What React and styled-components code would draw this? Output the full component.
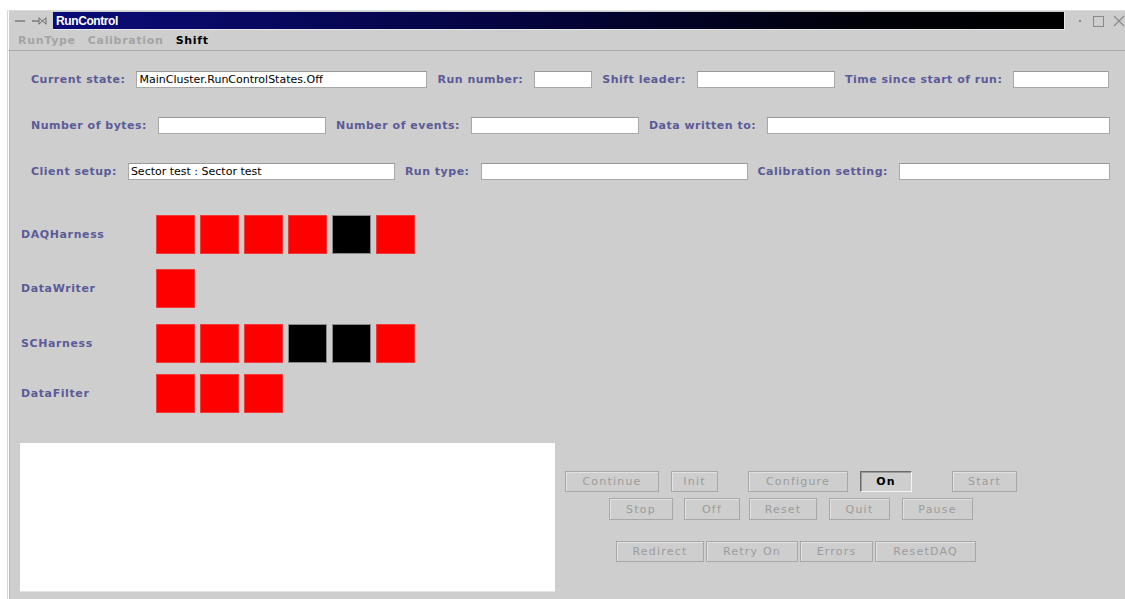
import styled, { createGlobalStyle } from "styled-components";

const GlobalStyle = createGlobalStyle`
  html, body {
    margin: 0;
    padding: 0;
    background: #ffffff;
    overflow: hidden;
  }
  body {
    font-family: "DejaVu Sans", "Liberation Sans", sans-serif;
  }
`;

const Frame = styled.div`
  margin: 10px 0 0 7px;
  height: 589px;
  border-top: 1px solid #dcdcdc;
  border-left: 1px solid #d6d6d6;
  background: #cecece;
  display: flex;
  flex-direction: column;
`;

const TitleBar = styled.div`
  height: 20px;
  display: flex;
  align-items: center;
  padding-left: 5px;
  border-left: 1px solid #ffffff;
`;

const WinIcons = styled.div`
  width: 34px;
  height: 12px;
  display: flex;
  align-items: center;
`;

const TitleBlock = styled.div`
  flex: 1;
  height: 17px;
  margin-left: 5px;
  margin-right: 8px;
  background: linear-gradient(to right, #0b0b7a 0%, #040440 45%, #000008 80%, #000 100%);
  border-right: 1px solid #e8e8e8;
  border-bottom: 1px solid #e8e8e8;
  display: flex;
  align-items: center;
  padding-left: 3px;
  color: #ffffff;
  font-family: "Liberation Sans", Arial, sans-serif;
  font-weight: bold;
  font-size: 12px;
  letter-spacing: -0.4px;
`;

const RightIcons = styled.div`
  width: 52px;
  height: 12px;
  display: flex;
  align-items: center;
`;

const MenuBar = styled.div`
  height: 19px;
  display: flex;
  align-items: center;
  gap: 12px;
  padding-left: 9px;
  border-left: 1px solid #ffffff;
  border-bottom: 1px solid #a9a9a9;
`;

const MenuItem = styled.span`
  font-size: 11px;
  font-weight: bold;
  letter-spacing: 0.7px;
  color: ${(p) => (p.active ? "#000000" : "#a4a4a4")};
`;

const Content = styled.div`
  flex: 1;
  border-left: 1px solid #ffffff;
  box-shadow: inset 1px 0 0 #bdbdbd;
  padding: 20px 0 0 1px;
  display: flex;
  flex-direction: column;
`;

const Fields = styled.div`
  display: flex;
  flex-direction: column;
  gap: 29px;
  padding-left: 21px;
`;

const FieldRow = styled.div`
  display: flex;
  align-items: center;
  height: 17px;
`;

const Label = styled.span`
  font-size: 11px;
  font-weight: bold;
  letter-spacing: 0.5px;
  color: #5b5b97;
  white-space: nowrap;
  margin-right: 11px;
`;

const TextField = styled.div`
  box-sizing: border-box;
  width: ${(p) => p.w}px;
  height: 17px;
  margin-right: 10px;
  background: #ffffff;
  border: 1px solid #a8a8a8;
  border-top-color: #999999;
  font-size: 11px;
  color: #000000;
  line-height: 15px;
  padding-left: 2px;
  white-space: nowrap;
  overflow: hidden;
`;

const Status = styled.div`
  margin-top: 35px;
  padding-left: 11px;
  display: flex;
  flex-direction: column;
`;

const StatusRow = styled.div`
  display: flex;
  align-items: center;
  height: 39px;
  margin-top: ${(p) => p.top || 0}px;
`;

const StatusName = styled.span`
  width: 135px;
  font-size: 11px;
  font-weight: bold;
  letter-spacing: 0.6px;
  color: #5b5b97;
`;

const Cells = styled.div`
  display: flex;
  gap: 5px;
`;

const Cell = styled.div`
  box-sizing: border-box;
  width: 39px;
  height: 39px;
  background: ${(p) => (p.on ? "#000000" : "#ff0000")};
  border: 1px solid ${(p) => (p.on ? "#8a8a8a" : "#f23a3a")};
`;

const Bottom = styled.div`
  display: flex;
  margin-top: 30px;
  padding-left: 10px;
`;

const LogArea = styled.div`
  width: 535px;
  height: 148px;
  background: #ffffff;
  border-bottom: 1px solid #e4e4e4;
`;

const Controls = styled.div`
  padding-top: 28px;
  display: flex;
  flex-direction: column;
`;

const ButtonRow = styled.div`
  display: flex;
  padding-left: ${(p) => p.indent}px;
  margin-top: ${(p) => p.top || 0}px;
`;

const Button = styled.div`
  box-sizing: border-box;
  width: ${(p) => p.w}px;
  height: ${(p) => p.h || 21}px;
  margin-left: ${(p) => p.ml || 0}px;
  display: flex;
  align-items: center;
  justify-content: center;
  font-size: 11px;
  letter-spacing: 1.2px;
  color: #9c9c9c;
  border: 1px solid #a8a8a8;
  box-shadow: inset 1px 1px 0 #e2e2e2;
  ${(p) =>
    p.focus &&
    `
    color: #000000;
    font-weight: bold;
    border-color: #6a6a6a #f4f4f4 #f4f4f4 #6a6a6a;
    box-shadow: inset 1px 1px 0 #9a9a9a;
  `}
`;

const states = [
  { name: "DAQHarness", cells: [0, 0, 0, 0, 1, 0], top: 0 },
  { name: "DataWriter", cells: [0], top: 15 },
  { name: "SCHarness", cells: [0, 0, 0, 1, 1, 0], top: 16 },
  { name: "DataFilter", cells: [0, 0, 0], top: 11 },
];

const LeftWinIcons = () => (
  <WinIcons>
    <svg width="34" height="12" viewBox="0 0 34 12">
      <line x1="1" y1="6" x2="11" y2="6" stroke="#6e6e6e" strokeWidth="1.3" />
      <line x1="18" y1="6" x2="25" y2="6" stroke="#6e6e6e" strokeWidth="1.3" />
      <path d="M25 2.5 L25 9.5 M25 3 L32 9 M25 9 L32 3 M32 2.5 L32 9.5" stroke="#6e6e6e" strokeWidth="1" fill="none" />
    </svg>
  </WinIcons>
);

const RightWinIcons = () => (
  <RightIcons>
    <svg width="52" height="12" viewBox="0 0 52 12">
      <rect x="6" y="5" width="2" height="2" fill="#8a8a8a" />
      <rect x="20.5" y="1.5" width="10" height="10" stroke="#8a8a8a" fill="none" />
      <path d="M41 1 L51 11 M51 1 L41 11" stroke="#8a8a8a" strokeWidth="1.2" />
    </svg>
  </RightIcons>
);

export default function App() {
  return (
    <>
      <GlobalStyle />
      <Frame>
        <TitleBar>
          <LeftWinIcons />
          <TitleBlock>RunControl</TitleBlock>
          <RightWinIcons />
        </TitleBar>
        <MenuBar>
          <MenuItem>RunType</MenuItem>
          <MenuItem>Calibration</MenuItem>
          <MenuItem active>Shift</MenuItem>
        </MenuBar>
        <Content>
          <Fields>
            <FieldRow>
              <Label>Current state:</Label>
              <TextField w={291}>MainCluster.RunControlStates.Off</TextField>
              <Label>Run number:</Label>
              <TextField w={58} />
              <Label>Shift leader:</Label>
              <TextField w={138} />
              <Label>Time since start of run:</Label>
              <TextField w={96} />
            </FieldRow>
            <FieldRow>
              <Label>Number of bytes:</Label>
              <TextField w={168} />
              <Label>Number of events:</Label>
              <TextField w={168} />
              <Label>Data written to:</Label>
              <TextField w={343} />
            </FieldRow>
            <FieldRow>
              <Label>Client setup:</Label>
              <TextField w={267}>Sector test : Sector test</TextField>
              <Label>Run type:</Label>
              <TextField w={267} />
              <Label>Calibration setting:</Label>
              <TextField w={211} />
            </FieldRow>
          </Fields>

          <Status>
            {states.map((s) => (
              <StatusRow key={s.name} top={s.top}>
                <StatusName>{s.name}</StatusName>
                <Cells>
                  {s.cells.map((c, i) => (
                    <Cell key={i} on={c ? 1 : 0} />
                  ))}
                </Cells>
              </StatusRow>
            ))}
          </Status>

          <Bottom>
            <LogArea />
            <Controls>
              <ButtonRow indent={10}>
                <Button w={94}>Continue</Button>
                <Button w={47} ml={12}>Init</Button>
                <Button w={100} ml={30}>Configure</Button>
                <Button w={52} ml={12} focus>On</Button>
                <Button w={65} ml={40}>Start</Button>
              </ButtonRow>
              <ButtonRow indent={54} top={6}>
                <Button w={64} h={22}>Stop</Button>
                <Button w={56} h={22} ml={11}>Off</Button>
                <Button w={68} h={22} ml={9}>Reset</Button>
                <Button w={61} h={22} ml={12}>Quit</Button>
                <Button w={71} h={22} ml={12}>Pause</Button>
              </ButtonRow>
              <ButtonRow indent={61} top={21}>
                <Button w={88}>Redirect</Button>
                <Button w={92} ml={2}>Retry On</Button>
                <Button w={73} ml={2}>Errors</Button>
                <Button w={101} ml={2}>ResetDAQ</Button>
              </ButtonRow>
            </Controls>
          </Bottom>
        </Content>
      </Frame>
    </>
  );
}
